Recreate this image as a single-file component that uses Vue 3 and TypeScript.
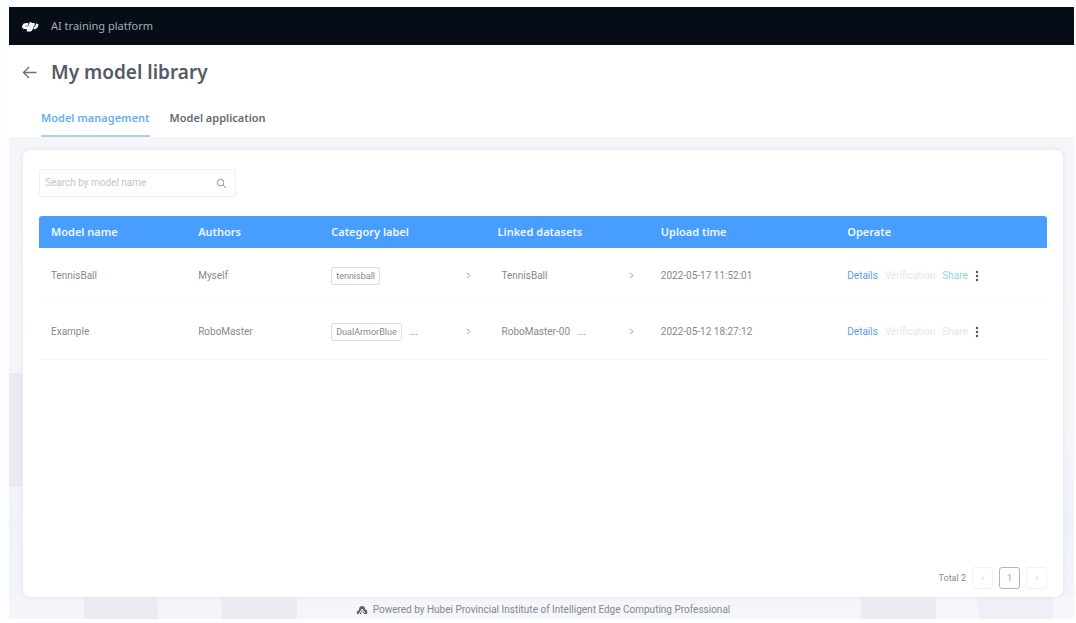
<script setup lang="ts">
import { ref } from 'vue'

interface Model {
  name: string
  author: string
  label: string
  dataset: string
  more: boolean
  time: string
  shareable: boolean
}

const query = ref('')

const columns: string[] = ['Model name', 'Authors', 'Category label', 'Linked datasets', 'Upload time', 'Operate']

const models: Model[] = [
  { name: 'TennisBall', author: 'Myself', label: 'tennisball', dataset: 'TennisBall', more: false, time: '2022-05-17 11:52:01', shareable: true },
  { name: 'Example', author: 'RoboMaster', label: 'DualArmorBlue', dataset: 'RoboMaster-00', more: true, time: '2022-05-12 18:27:12', shareable: false },
]
</script>

<template>
  <div class="page">
    <header class="topbar">
      <svg class="logo" viewBox="0 0 34 20" aria-label="DJI" role="img">
        <g fill="none" stroke="#f4f6f8" stroke-width="5" stroke-linejoin="round">
          <path d="M17 2 L14 12 H5 Q2 12 3 9 Q4 6 8 6 H12" />
          <path d="M21 5 L18 14 Q17 18 12 17 H9" />
          <path d="M17 6 H24 M29 5 L27 11 Q26 13 22 13" />
        </g>
      </svg>
      <span class="brand">AI training platform</span>
    </header>

    <section class="heading">
      <div class="title-row">
        <button class="back" type="button" aria-label="Back">
          <svg viewBox="0 0 16 14"><path d="M15 7H1M7 1L1 7l6 6" fill="none" stroke="#6b7078" stroke-width="1.5" /></svg>
        </button>
        <h1>My model library</h1>
      </div>
      <nav class="tabs">
        <a class="tab active" href="#management">Model management</a>
        <a class="tab" href="#application">Model application</a>
      </nav>
    </section>

    <main class="body">
      <section class="card">
        <div class="search">
          <input v-model="query" type="text" placeholder="Search by model name" aria-label="Search by model name" />
          <button type="button" aria-label="Search">
            <svg viewBox="0 0 12 12"><circle cx="5" cy="5" r="3.5" /><path d="M7.6 7.6L11 11" /></svg>
          </button>
        </div>

        <table>
          <colgroup>
            <col class="c-name" /><col class="c-author" /><col class="c-label" />
            <col class="c-data" /><col class="c-time" /><col class="c-op" />
          </colgroup>
          <thead>
            <tr><th v-for="c in columns" :key="c" scope="col">{{ c }}</th></tr>
          </thead>
          <tbody>
            <tr v-for="m in models" :key="m.name">
              <td>{{ m.name }}</td>
              <td>{{ m.author }}</td>
              <td>
                <div class="cell">
                  <span class="tag">{{ m.label }}</span>
                  <span v-if="m.more">...</span>
                  <button class="expand" type="button" aria-label="Show labels">
                    <svg viewBox="0 0 6 8"><path d="M1 1l4 3-4 3" /></svg>
                  </button>
                </div>
              </td>
              <td>
                <div class="cell">
                  <span class="dataset">{{ m.dataset }}</span>
                  <span v-if="m.more">...</span>
                  <button class="expand" type="button" aria-label="Show datasets">
                    <svg viewBox="0 0 6 8"><path d="M1 1l4 3-4 3" /></svg>
                  </button>
                </div>
              </td>
              <td>{{ m.time }}</td>
              <td>
                <div class="ops">
                  <a href="#details">Details</a>
                  <button type="button" disabled>Verification</button>
                  <button class="share" type="button" :disabled="!m.shareable">Share</button>
                  <button class="dots" type="button" aria-label="More actions">
                    <svg viewBox="0 0 4 12"><circle cx="2" cy="2" r="1.2" /><circle cx="2" cy="6" r="1.2" /><circle cx="2" cy="10" r="1.2" /></svg>
                  </button>
                </div>
              </td>
            </tr>
          </tbody>
        </table>

        <nav class="pager" aria-label="Pages">
          <span>Total 2</span>
          <button type="button" disabled aria-label="Previous page">‹</button>
          <button class="current" type="button">1</button>
          <button type="button" disabled aria-label="Next page">›</button>
        </nav>
      </section>

      <footer>
        <svg viewBox="0 0 12 10"><path d="M1 9Q0 6 3 5Q3 1 6 1Q9 1 9 4Q12 5 11 9H8L6 5L5 9Z" fill="#5d6269" /><path d="M3 9L6 4L9 8" fill="none" stroke="#f1f3f7" /></svg>
        <span>Powered by Hubei Provincial Institute of Intelligent Edge Computing Professional</span>
      </footer>
    </main>
  </div>
</template>

<style>
body {
  margin: 0;
  background: #fdfeff;
}
</style>

<style scoped>
.page {
  box-sizing: border-box;
  min-height: 100vh;
  padding: 7px 2px 4px 9px;
  display: flex;
  flex-direction: column;
  font-family: Roboto, "Noto Sans", sans-serif;
  font-size: 10px;
  line-height: 16px;
  color: #858991;
}
button {
  padding: 0;
  border: 0;
  background: none;
  font: inherit;
  color: inherit;
}
svg {
  display: block;
}
a {
  text-decoration: none;
}
.topbar {
  height: 38px;
  padding-left: 13px;
  display: flex;
  align-items: center;
  gap: 11px;
  background: #070d17;
}
.logo {
  width: 18px;
  height: 11px;
}
.brand,
h1,
.tab,
th {
  font-family: "Noto Sans", "Open Sans", sans-serif;
}
.brand {
  color: #a6abb2;
  font-size: 11px;
}
.heading {
  background: #fff;
}
.title-row {
  display: flex;
  align-items: center;
  gap: 13px;
  padding: 14px 13px 0;
}
.back svg {
  width: 16px;
  height: 13px;
}
h1 {
  margin: 0;
  font-size: 19px;
  line-height: 26px;
  font-weight: 600;
  color: #555965;
}
.tabs {
  display: flex;
  gap: 20px;
  padding: 24px 32px 0;
}
.tab {
  height: 26px;
  border-bottom: 2px solid transparent;
  font-size: 11px;
  line-height: 18px;
  font-weight: 600;
  color: #666a71;
}
.tab.active {
  color: #65aff4;
  border-color: #a9d2e8;
}
.body {
  flex: 1;
  display: flex;
  flex-direction: column;
  padding: 13px 11px 0 14px;
  background:
    linear-gradient(90deg, #f3f5fa 7%, #eaecf2 7% 14%, #f3f5fa 14% 20%, #eaecf2 20% 27%, #f4f6fa 27% 80%, #eaecf2 80% 87%, #f5f7fa 87% 91%, #eff0f7 91% 98%, #f5f7fa 98%) bottom / 100% 22px no-repeat,
    linear-gradient(90deg, #e9ebf0 14px, transparent 14px) 0 236px / 100% 114px no-repeat,
    linear-gradient(#f5f5fa, #f5f6fa 60%, #eff3f8 80%, #f3f5fa);
}
.card {
  flex: 1;
  display: flex;
  flex-direction: column;
  padding: 19px 16px 8px;
  border-radius: 8px;
  background: #fff;
  box-shadow: 0 0 5px #e1e3ea;
}
.search {
  box-sizing: border-box;
  display: flex;
  align-items: center;
  width: 197px;
  height: 28px;
  margin-bottom: 19px;
  padding: 0 8px 0 5px;
  border: 1px solid #efeff1;
  border-radius: 3px;
}
.search input {
  flex: 1;
  min-width: 0;
  padding: 0;
  border: 0;
  outline: 0;
  background: none;
  font: inherit;
  color: #777;
}
.search input::placeholder {
  color: #c3c5c9;
  opacity: 1;
}
.search svg {
  width: 11px;
  height: 11px;
  fill: none;
  stroke: #85888d;
}
table {
  width: 100%;
  table-layout: fixed;
  border-collapse: collapse;
}
.c-name { width: 14.6%; }
.c-author { width: 13.2%; }
.c-label { width: 16.5%; }
.c-data { width: 16.2%; }
.c-time { width: 18.5%; }
.c-op { width: 21%; }
th {
  height: 32px;
  padding: 0 12px;
  background: #479eff;
  color: #eef7ff;
  font-size: 11px;
  font-weight: 600;
  text-align: left;
}
th:first-child {
  border-top-left-radius: 3px;
}
th:last-child {
  border-top-right-radius: 3px;
}
td {
  height: 55px;
  padding: 0 12px;
  border-bottom: 1px solid #fdfdfe;
}
tr:last-child td {
  border-color: #f6f7f8;
}
.cell {
  display: flex;
  align-items: center;
  gap: 8px;
}
.tag {
  padding: 0 4px;
  border: 1px solid #dcdee1;
  border-radius: 2px;
  font-size: 9px;
}
.dataset {
  padding-left: 4px;
}
.expand {
  margin-left: auto;
  padding-right: 3px;
}
.expand svg {
  width: 5px;
  height: 7px;
  fill: none;
  stroke: #94979d;
}
.ops {
  display: flex;
  align-items: center;
  gap: 7px;
}
.ops a {
  color: #5c9de8;
}
.ops button:disabled {
  color: #e3e5e8;
}
.ops .share {
  color: #8fd6d8;
}
.ops .dots svg {
  width: 4px;
  height: 12px;
  fill: #50545a;
}
.pager {
  display: flex;
  align-items: center;
  justify-content: flex-end;
  gap: 6px;
  margin-top: auto;
  font-size: 9px;
}
.pager button {
  box-sizing: border-box;
  width: 21px;
  height: 22px;
  border: 1px solid #f1f2f4;
  border-radius: 3px;
  color: #bfc3c8;
}
.pager .current {
  border-color: #a5bbc9;
  color: #8aa9bd;
}
footer {
  display: flex;
  align-items: center;
  justify-content: center;
  gap: 5px;
  height: 22px;
  padding-top: 4px;
  box-sizing: border-box;
}
footer svg {
  width: 12px;
  height: 10px;
}
</style>
